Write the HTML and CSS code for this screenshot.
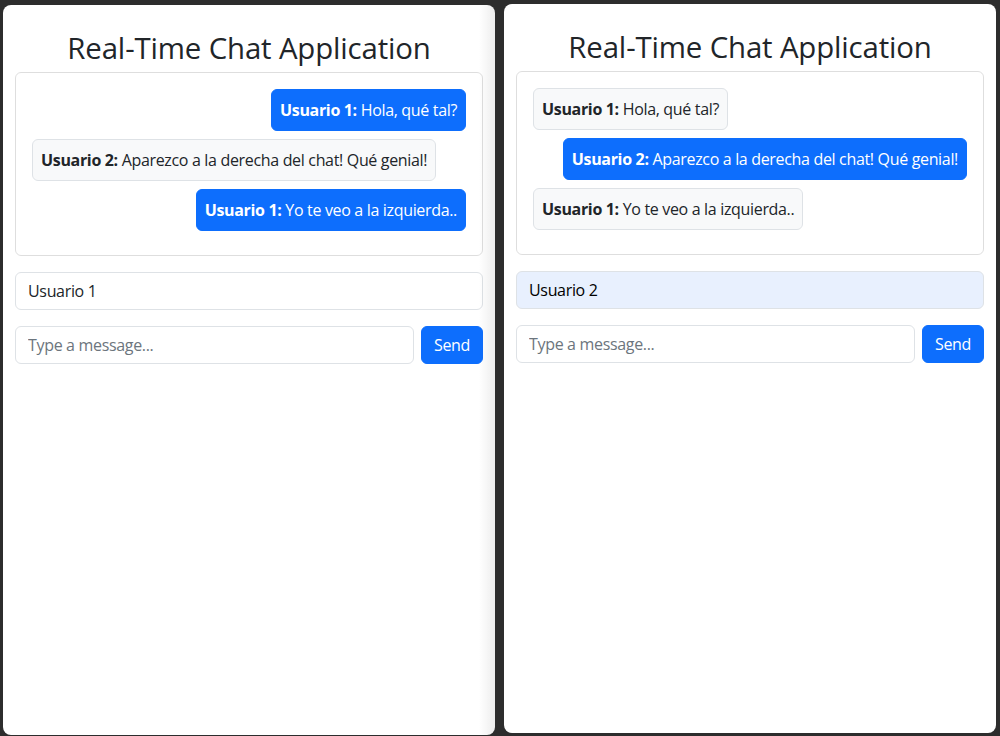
FILE: index.html
```html
<!DOCTYPE html>
<html lang="es">
<head>
<meta charset="utf-8">
<title>Real-Time Chat Application</title>
<link rel="stylesheet" href="styles.css">
</head>
<body>
<div class="desktop">
  <div class="window win-left">
    <div class="container">
      <h1 class="title">Real-Time Chat Application</h1>
      <div class="card">
        <div class="messages">
          <div class="msg mine"><strong>Usuario 1:</strong> Hola, qué tal?</div>
          <div class="msg other"><strong>Usuario 2:</strong> Aparezco a la derecha del chat! Qué genial!</div>
          <div class="msg mine"><strong>Usuario 1:</strong> Yo te veo a la izquierda..</div>
        </div>
      </div>
      <input class="form-control user-input" type="text" value="Usuario 1">
      <div class="send-row">
        <input class="form-control msg-input" type="text" placeholder="Type a message...">
        <button class="btn-send" type="button">Send</button>
      </div>
    </div>
  </div>
  <div class="window win-right">
    <div class="container">
      <h1 class="title">Real-Time Chat Application</h1>
      <div class="card">
        <div class="messages">
          <div class="msg other"><strong>Usuario 1:</strong> Hola, qué tal?</div>
          <div class="msg mine"><strong>Usuario 2:</strong> Aparezco a la derecha del chat! Qué genial!</div>
          <div class="msg other"><strong>Usuario 1:</strong> Yo te veo a la izquierda..</div>
        </div>
      </div>
      <input class="form-control user-input autofilled" type="text" value="Usuario 2">
      <div class="send-row">
        <input class="form-control msg-input" type="text" placeholder="Type a message...">
        <button class="btn-send" type="button">Send</button>
      </div>
    </div>
  </div>
</div>
</body>
</html>
```
FILE: styles.css
```css
* { box-sizing: border-box; }

html, body {
  margin: 0;
  height: 736px;
  overflow: hidden;
}

body {
  background: #2d2d2d;
  font-family: "Open Sans", "Noto Sans", sans-serif;
  font-size: 16px;
  line-height: 1.5;
  color: #212529;
  letter-spacing: -0.33px;
}

.desktop {
  display: flex;
  align-items: flex-start;
  gap: 9px;
  padding: 4px 0 0 3px;
}

.window {
  position: relative;
  width: 492px;
  background: #fff;
  border-radius: 8px;
  overflow: hidden;
}

.win-left {
  margin-top: 1px;
  height: 730px;
}

.win-left::after {
  content: "";
  position: absolute;
  top: 0;
  right: 0;
  bottom: 0;
  width: 16px;
  background: linear-gradient(to right, rgba(0,0,0,0), rgba(0,0,0,0.07));
  pointer-events: none;
}

.win-right {
  height: 729px;
}

.container {
  padding: 24px 12px 0;
}

.title {
  margin: 2px 0 6px;
  font-size: 29.4px;
  font-weight: 500;
  line-height: 1.2;
  letter-spacing: -0.15px;
  text-align: center;
}

.card {
  border: 1px solid rgba(0,0,0,0.13);
  border-radius: 6px;
  margin-bottom: 16px;
}

.messages {
  display: flex;
  flex-direction: column;
  padding: 16px 16px 16px;
}

.msg {
  padding: 8px;
  margin-bottom: 8px;
  border-radius: 6px;
  border: 1px solid #dee2e6;
  line-height: 24px;
  white-space: nowrap;
}

.msg strong { font-weight: 700; }

.msg.mine {
  align-self: flex-end;
  background: #0d6efd;
  border-color: #0d6efd;
  color: #fff;
}

.msg.other {
  align-self: flex-start;
  background: #f8f9fa;
  color: #212529;
}

.form-control {
  display: block;
  width: 100%;
  height: 38px;
  padding: 6px 12px;
  font-family: inherit;
  font-size: 16px;
  line-height: 24px;
  letter-spacing: -0.33px;
  color: #212529;
  background: #fff;
  border: 1px solid #dee2e6;
  border-radius: 6px;
  outline: none;
}

.form-control::placeholder {
  color: #6c757d;
  opacity: 1;
}

.user-input {
  margin-bottom: 16px;
}

.autofilled {
  background: #e8f0fe;
  color: #000;
}

.send-row {
  display: flex;
  gap: 7px;
}

.msg-input {
  flex: 1;
  width: auto;
}

.btn-send {
  height: 38px;
  padding: 6px 12px;
  font-family: inherit;
  font-size: 16px;
  line-height: 24px;
  letter-spacing: -0.33px;
  color: #fff;
  background: #0d6efd;
  border: 1px solid #0d6efd;
  border-radius: 6px;
}
```
